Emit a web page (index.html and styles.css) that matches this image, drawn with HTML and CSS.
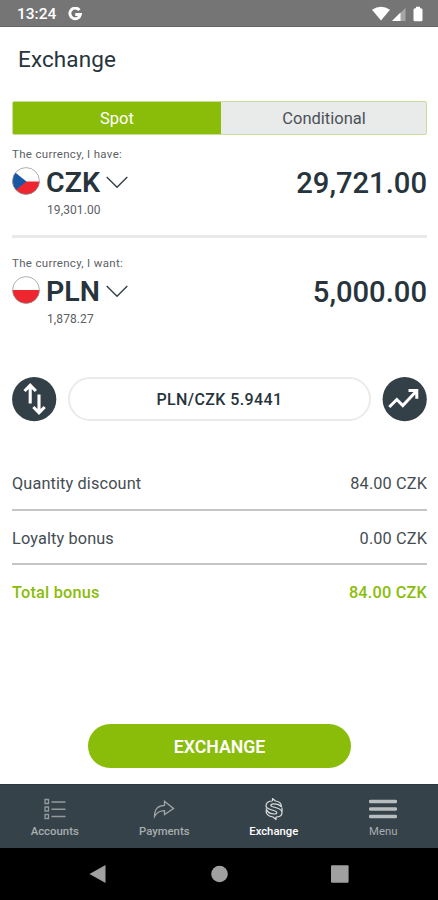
FILE: index.html
```html
<!DOCTYPE html>
<html lang="en">
<head>
<meta charset="utf-8">
<title>Exchange</title>
<link rel="stylesheet" href="styles.css">
</head>
<body>
<div class="phone">
  <header class="status">
    <span class="clock">13:24</span>
    <svg class="google" width="14" height="14" viewBox="0 0 14 14"><path d="M11.400 3.200A5.300 5.300 0 1 0 12.400 7.500H7.200" fill="none" stroke="#fff" stroke-width="2.900"/></svg>
    <svg class="signals" width="54" height="18" viewBox="0 0 54 18">
      <path d="M0 4.800Q9 -1.500 18 4.800L9 15.500Z" fill="#fff"/>
      <path d="M33.500 3V16H20Z" fill="#a6a6a6"/>
      <path d="M28.500 7.500V16H20Z" fill="#fff"/>
      <path d="M44 1.800h4v1.500h1a1.500 1.500 0 0 1 1.500 1.500V15a1.300 1.300 0 0 1-1.300 1.300h-6.400A1.300 1.300 0 0 1 41.500 15V4.800A1.500 1.500 0 0 1 43 3.300h1z" fill="#fff"/>
    </svg>
  </header>
  <h1 class="title">Exchange</h1>
  <div class="tabs"><div class="tab active">Spot</div><div class="tab">Conditional</div></div>

  <section class="currency">
    <div class="label">The currency, I have:</div>
    <div class="row">
      <svg class="flag" width="28" height="28" viewBox="0 0 28 28">
        <clipPath id="disc"><circle cx="14" cy="14" r="13.500"/></clipPath>
        <g clip-path="url(#disc)"><path d="M0 0h28v14H0z" fill="#fff"/><path d="M0 14.500h28V28H0z" fill="#ed2630"/><path d="M0 3L14.500 14.500L0 26z" fill="#1857a4"/></g>
        <circle cx="14" cy="14" r="13.400" fill="none" stroke="#8b8f91" stroke-width=".7"/>
      </svg>
      <span class="code">CZK</span>
      <svg class="chevron" width="22" height="13" viewBox="0 0 22 13"><path d="M.7 1L11 11.300L21.300 1" fill="none" stroke="#344047" stroke-width="1.400"/></svg>
      <span class="amount">29,721.00</span>
    </div>
    <div class="balance">19,301.00</div>
  </section>
  <section class="currency second">
    <div class="label">The currency, I want:</div>
    <div class="row">
      <svg class="flag" width="28" height="28" viewBox="0 0 28 28">
        <g clip-path="url(#disc)"><path d="M0 0h28v14H0z" fill="#fff"/><path d="M0 14h28v14H0z" fill="#ed2630"/></g>
        <circle cx="14" cy="14" r="13.400" fill="none" stroke="#8b8f91" stroke-width=".7"/>
      </svg>
      <span class="code">PLN</span>
      <svg class="chevron" width="22" height="13" viewBox="0 0 22 13"><path d="M.7 1L11 11.300L21.300 1" fill="none" stroke="#344047" stroke-width="1.400"/></svg>
      <span class="amount">5,000.00</span>
    </div>
    <div class="balance">1,878.27</div>
  </section>

  <div class="rate-row">
    <svg width="45" height="45" viewBox="0 0 45 45"><circle cx="22.200" cy="22.200" r="22.100" fill="#334047"/><path d="M18.200 26.500V9M12.500 14L18.200 8.300L23.900 14M27 17.500V35M21.300 30L27 35.700L32.700 30" fill="none" stroke="#fff" stroke-width="3.100"/></svg>
    <div class="rate"><span>PLN/CZK 5.9441</span></div>
    <svg width="45" height="45" viewBox="0 0 45 45"><circle cx="22.700" cy="22.200" r="22.100" fill="#334047"/><path d="M7.300 30L14.800 22.500L20.800 28.500L34 14.500M26.500 13.500H34.800V21.800" fill="none" stroke="#fff" stroke-width="3"/></svg>
  </div>

  <div class="bonuses">
    <div class="bonus"><span>Quantity discount</span><span>84.00 CZK</span></div>
    <div class="bonus"><span>Loyalty bonus</span><span>0.00 CZK</span></div>
    <div class="bonus total"><span>Total bonus</span><span>84.00 CZK</span></div>
  </div>
  <div class="exchange"><span>EXCHANGE</span></div>

  <nav class="nav">
    <div class="item">
      <svg width="28" height="24" viewBox="0 0 28 24"><path d="M4 2.500h3.500v4H4zM4 10h3.500v4H4zM4 17.500h3.500v4H4z" fill="none" stroke="#929a9e" stroke-width="1.300"/><path d="M10.500 5h14M10.500 12.300h14M10.500 19.500h14" stroke="#929a9e" stroke-width="1.500"/></svg>
      <span>Accounts</span>
    </div>
    <div class="item">
      <svg width="28" height="24" viewBox="0 0 28 24"><path d="M4.500 19.500C4.500 12 8 8.300 14.500 8.300V4.300L23.500 11.500L14.500 17.500V13.700C9.500 13.700 6.800 15.500 4.500 19.500Z" fill="none" stroke="#a0a7aa" stroke-width="1.300"/></svg>
      <span>Payments</span>
    </div>
    <div class="item current">
      <svg width="28" height="24" viewBox="0 0 28 24"><path d="M12.500 4V1.500L15.500 4C19.500 4.500 21.500 7 21.500 10M12.500 4C8.500 4 6 6 6 8.700C6 11 8 11.800 10.500 12.500L15 14C17.500 15 17.500 17 14.500 17C10.500 17 7 15 6 11.500M21.500 10C20 8 17.500 6.800 14 6.800C10.500 6.800 10 8.500 12 9.500L17 11C20 12 22 13 22 15.500C22 18.500 19.500 20 16 20V22.500L13 20C8.500 19.500 6 17 6 13.500M22 10.500V15" fill="none" stroke="#d9ddde" stroke-width="1.200" stroke-linejoin="round"/></svg>
      <span>Exchange</span>
    </div>
    <div class="item last">
      <svg width="28" height="24" viewBox="0 0 28 24"><path d="M1.500 4.500h25M1.500 12h25M1.500 19.500h25" stroke="#b8bec0" stroke-width="3.500" stroke-linecap="round"/></svg>
      <span>Menu</span>
    </div>
  </nav>
  <footer class="system">
    <svg width="262" height="20" viewBox="0 0 262 20"><path d="M17.500 1v18L1.500 10z" fill="#a0a0a0"/><circle cx="131.500" cy="10" r="8.300" fill="#a0a0a0"/><rect x="243" y="1.300" width="17.600" height="17.500" rx="1" fill="#a0a0a0"/></svg>
  </footer>
</div>
</body>
</html>
```
FILE: styles.css
```css
* { box-sizing: border-box; }
body { margin: 0; font-family: Roboto, sans-serif; background: #fff; color: #27343c; }
svg { display: block; flex: none; }
.phone { width: 438px; height: 900px; display: flex; flex-direction: column; overflow: hidden; white-space: nowrap; }
.status { height: 27px; flex: none; background: #757575; border-bottom: 1px solid #656565; display: flex; align-items: center; padding: 2px 12px 0 17px; color: #fff; }
.clock { font-size: 15.500px; font-weight: 500; }
.google { margin-left: 12px; }
.signals { margin-left: auto; }
.title { margin: 18px 0 0 18px; height: 28px; line-height: 28px; font-size: 22.500px; font-weight: 400; letter-spacing: .1px; }
.tabs { margin: 28px 11px 0 12px; height: 34px; flex: none; display: flex; border: 1px solid #c8dd97; border-radius: 2px; background: #e9eaea; overflow: hidden; }
.tab { flex: 1; display: flex; align-items: center; justify-content: center; font-size: 16.500px; color: #4b5257; padding-left: 1px; }
.active { background: #8abd0a; color: #fff; margin: -1px 0 -1px -1px; flex: 0 0 209px; }
.currency { height: 103px; flex: none; margin: 0 11px 0 12px; padding-top: 11px; border-bottom: 3px solid #e9e9e9; }
.second { height: 106px; padding-top: 17px; border: 0; }
.label { height: 16px; line-height: 16px; font-size: 11.500px; letter-spacing: .32px; color: #5c6164; }
.row { height: 34px; margin-top: 3px; display: flex; align-items: center; padding-top: 4px; }
.flag { margin-top: -6px; }
.code { margin-left: 6px; width: 54px; font-size: 28.500px; font-weight: 600; line-height: 34px; margin-top: -2px; }
.chevron { margin-left: 6px; margin-top: -4px; }
.amount { margin-left: auto; font-size: 29.200px; font-weight: 500; line-height: 34px; margin-top: -2px; }
.balance { height: 16px; line-height: 16px; margin: 3px 0 0 35px; font-size: 12px; letter-spacing: .1px; color: #5c6164; }
.rate-row { margin: 33px 11px 0 12px; height: 45px; flex: none; display: flex; gap: 11px; }
.rate { flex: 1; height: 44px; border: 2px solid #ebebeb; border-radius: 22px; display: flex; align-items: center; justify-content: center; font-size: 16px; font-weight: 500; letter-spacing: .4px; }
.bonuses { margin: 34px 11px 0 12px; }
.bonus { height: 54.500px; display: flex; justify-content: space-between; align-items: center; border-bottom: 2px solid #c4c5c5; font-size: 16.300px; color: #454d52; letter-spacing: .13px; padding-top: 3px; }
.total { border: 0; color: #8abd0a; font-weight: 500; padding-top: 0; letter-spacing: .2px; }
.exchange { margin: auto 87px 16px 88px; height: 44px; flex: none; background: #8abd0a; border-radius: 22px; color: #fff; display: flex; align-items: center; justify-content: center; font-size: 17.700px; font-weight: 600; padding-top: 1px; }
.nav { height: 64px; flex: none; background: #364249; border-top: 1px solid #2c383f; display: flex; color: #a7adb0; padding-top: 12px; }
.item { flex: 1; display: flex; flex-direction: column; align-items: center; font-size: 11.300px; line-height: 16px; gap: 3px; font-weight: 500; }
.item:first-child { font-size: 11.400px; gap: 2px; }
.last { font-weight: 400; }
.current { color: #fff; }
.system { height: 52px; flex: none; background: #000; display: flex; justify-content: center; align-items: center; }
```
